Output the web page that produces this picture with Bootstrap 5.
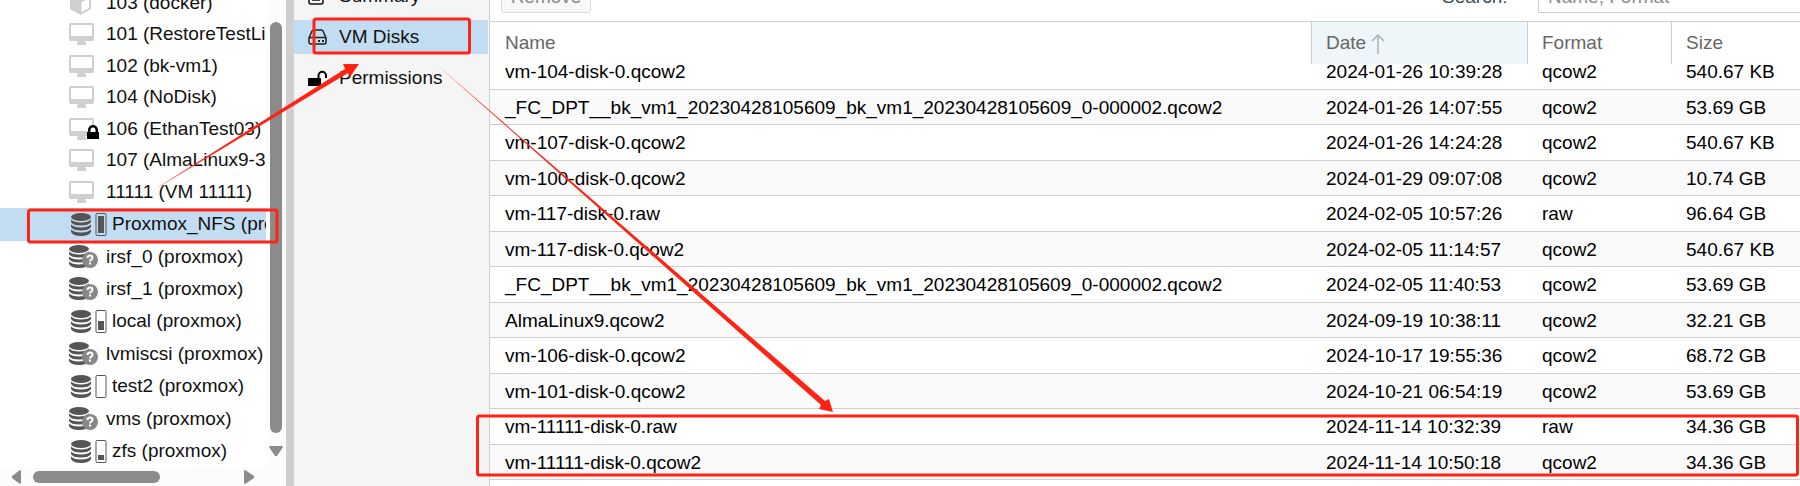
<!DOCTYPE html>
<html lang="en">
<head>
<meta charset="utf-8">
<meta name="viewport" content="width=device-width, initial-scale=1">
<title>Proxmox VE - VM Disks</title>
<link rel="stylesheet" href="https://cdn.jsdelivr.net/npm/bootstrap@5.3.0/dist/css/bootstrap.min.css">
<style>
body{font-family:"Liberation Sans",Arial,sans-serif;font-size:19px;line-height:24px;color:#111;background:#fff}
a{color:inherit;text-decoration:none}
.shell{height:100vh}
.tree-pane{width:286px}
.tree-list{width:266px}
.node{height:32px;padding-left:69px;white-space:nowrap;flex:none}
.node.short{height:31px}
.node.store{height:33px}
.node.picked,.menu-link.picked{background:#c2ddf1}
.node svg{flex:none}
.node .ico{width:37px;flex:none}
.node .ico-s{width:43px;flex:none}
.vbar{width:20px;padding:22px 0 10px;gap:9px;background:#fcfcfc}
.vthumb{width:12px;border-radius:6px;background:#8b8b8b}
.hbar{height:19px;padding:0 12px;background:#fcfcfc}
.hthumb{width:127px;height:12px;border-radius:6px;background:#8b8b8b}
.splitter{width:8px;background:#cfcfcf}
.menu-pane{width:196px;background:#f5f5f5;border-right:1px solid #cfcfcf}
.menu-link{height:34px;padding-left:14px;margin-bottom:7px;margin-right:1px}
.menu-link svg{width:31px;flex:none}
.menu-list{margin-top:-21px}
.tools{height:21px;padding:0 0 8px 11px}
.tools .btn{height:32px;width:90px;font-size:19px;line-height:20px;color:#8a8a8a;background:#f8f8f8;border:1px solid #dcdcdc;border-radius:3px}
.tools label{color:#3f4d55;width:96px;line-height:32px}
.tools input{width:262px;height:32px;font-size:19px;border:1px solid #cfcfcf;border-right:0;border-radius:0;padding:4px 9px}
.tools input::placeholder{color:#8c8c8c}
.disks{table-layout:fixed;border-top:1px solid #cfcfcf;border-collapse:separate;border-spacing:0}
.disks th{height:42px;padding:0 0 0 14px;font-weight:400;color:#666;vertical-align:middle;border-right:1px solid #cfcfcf}
.disks th:last-child{border-right:0}
.disks th.sorted{background:#eff6fa}
.disks td{height:35px;padding:1px 0 0 14px;border-bottom:1px solid #cfcfcf;white-space:nowrap;color:#000}
.disks th:first-child,.disks td:first-child{padding-left:15px}
.disks tbody tr:nth-child(odd) td{height:36px}
.disks tbody tr:nth-child(even) td{background:#fafafa}
.disks tbody tr:first-child td{height:26px;line-height:12px;padding-top:0;padding-bottom:10px}
.c-date{width:216px}.c-format{width:144px}.c-size{width:128px}
.marks{pointer-events:none}
</style>
</head>
<body class="overflow-hidden">
<svg class="d-none" aria-hidden="true">
<symbol id="i-vm" viewBox="0 0 25 22"><path fill="#cfcfcf" fill-rule="evenodd" d="M2 0h21q2 0 2 2v14q0 2-2 2h-7l1 2v2H8v-2l1-2H2q-2 0-2-2V2Q0 0 2 0zM2 2v11h21V2z"/></symbol>
<symbol id="i-lock" viewBox="0 0 12 14"><path d="M0 7h1V5a5 5 0 0 1 10 0v2h1v7H0z"/><path fill="#fff" d="M3.500 7V5a2.500 2.500 0 0 1 5 0v2z"/></symbol>
<symbol id="i-db" viewBox="0 0 20 23"><g fill="#555"><ellipse cx="10" cy="4" rx="10" ry="4"/><path d="M0 6.500q3 3 10 3t10-3v2.500q-2 3.500-10 3.500T0 9zM0 11.500q3 3 10 3t10-3V14q-2 3.500-10 3.500T0 14zM0 16.500q3 3 10 3t10-3V19q-2 4-10 4T0 19z"/></g></symbol>
<symbol id="i-dbq" viewBox="0 0 29 23"><use href="#i-db" width="20" height="23"/><circle cx="21" cy="15" r="8" fill="#888"/><path d="M18.500 13q0-2.500 2.500-2.500t2.500 2.300q0 1.200-1.500 2-1 .6-1 1.700" fill="none" stroke="#fff" stroke-width="2"/><path fill="#fff" d="M20 17.500h2v2h-2z"/></symbol>
</svg>
<div class="shell d-flex position-relative overflow-hidden">
 <aside class="tree-pane d-flex flex-column flex-shrink-0">
  <div class="d-flex flex-grow-1 overflow-hidden">
   <nav class="tree-list d-flex flex-column justify-content-end overflow-hidden" aria-label="Resources">
    <a href="#" class="node d-flex align-items-center"><span class="ico d-flex"><svg width="23" height="26" viewBox="0 0 23 26"><path fill="#cfcfcf" d="M11.500 1 22 5v14l-10.500 6L1 19V5z"/><path fill="#fff" d="m12.500 12 7.500-3.500v9.500l-7.500 4zM4 5.500 11.500 3 19 5.500 11.500 9z"/></svg></span>103 (docker)</a>
    <a href="#" class="node short d-flex align-items-center"><span class="ico d-flex"><svg width="25" height="22"><use href="#i-vm"/></svg></span>101 (RestoreTestLinux)</a>
    <a href="#" class="node d-flex align-items-center"><span class="ico d-flex"><svg width="25" height="22"><use href="#i-vm"/></svg></span>102 (bk-vm1)</a>
    <a href="#" class="node short d-flex align-items-center"><span class="ico d-flex"><svg width="25" height="22"><use href="#i-vm"/></svg></span>104 (NoDisk)</a>
    <a href="#" class="node d-flex align-items-center"><span class="ico d-flex"><svg width="30" height="22"><use href="#i-vm" width="25" height="22"/><use href="#i-lock" x="18" y="7" width="12" height="14"/></svg></span>106 (EthanTest03)</a>
    <a href="#" class="node short d-flex align-items-center"><span class="ico d-flex"><svg width="25" height="22"><use href="#i-vm"/></svg></span>107 (AlmaLinux9-3-test)</a>
    <a href="#" class="node d-flex align-items-center"><span class="ico d-flex"><svg width="25" height="22"><use href="#i-vm"/></svg></span>11111 (VM 11111)</a>
    <a href="#" class="node store picked d-flex align-items-center"><span class="ico-s d-flex"><svg width="39" height="23"><use href="#i-db" x="2" width="20" height="23"/><rect x="27" y=".5" width="10" height="22" rx="1" fill="none" stroke="#555"/><path fill="#555" d="M29 3h6v17h-6z"/></svg></span>Proxmox_NFS (proxmox)</a>
    <a href="#" class="node d-flex align-items-center"><span class="ico d-flex"><svg width="29" height="23"><use href="#i-dbq"/></svg></span>irsf_0 (proxmox)</a>
    <a href="#" class="node d-flex align-items-center"><span class="ico d-flex"><svg width="29" height="23"><use href="#i-dbq"/></svg></span>irsf_1 (proxmox)</a>
    <a href="#" class="node store d-flex align-items-center"><span class="ico-s d-flex"><svg width="39" height="23"><use href="#i-db" x="2" width="20" height="23"/><rect x="27" y=".5" width="10" height="22" rx="1" fill="none" stroke="#555"/><path fill="#555" d="M29 11h6v9h-6z"/></svg></span>local (proxmox)</a>
    <a href="#" class="node d-flex align-items-center"><span class="ico d-flex"><svg width="29" height="23"><use href="#i-dbq"/></svg></span>lvmiscsi (proxmox)</a>
    <a href="#" class="node store d-flex align-items-center"><span class="ico-s d-flex"><svg width="39" height="23"><use href="#i-db" x="2" width="20" height="23"/><rect x="27" y=".5" width="10" height="22" rx="1" fill="none" stroke="#555"/></svg></span>test2 (proxmox)</a>
    <a href="#" class="node d-flex align-items-center"><span class="ico d-flex"><svg width="29" height="23"><use href="#i-dbq"/></svg></span>vms (proxmox)</a>
    <a href="#" class="node store d-flex align-items-center"><span class="ico-s d-flex"><svg width="39" height="23"><use href="#i-db" x="2" width="20" height="23"/><rect x="27" y=".5" width="10" height="22" rx="1" fill="none" stroke="#555"/><path fill="#555" d="M29 15h6v5h-6z"/></svg></span>zfs (proxmox)</a>
   </nav>
   <div class="vbar d-flex flex-column align-items-center">
    <div class="vthumb flex-grow-1"></div>
    <svg width="14" height="16" viewBox="0 0 14 16"><path fill="#8b8b8b" d="M1 4h12l1 1-6 9H6L0 5z"/></svg>
   </div>
  </div>
  <div class="hbar d-flex align-items-center">
   <svg width="21" height="14" viewBox="0 0 21 14"><path fill="#8b8b8b" d="M9 1v12l-1 1-8-6V6l8-6z"/></svg>
   <div class="hthumb"></div>
   <svg class="ms-auto me-3" width="14" height="14" viewBox="0 0 14 14"><path fill="#8b8b8b" d="M1 0l9 6v2l-9 6-1-1V1z"/></svg>
  </div>
 </aside>
 <div class="splitter flex-shrink-0"></div>
 <nav class="menu-pane flex-shrink-0" aria-label="Storage">
  <div class="menu-list">
   <a href="#" class="menu-link d-flex align-items-center"><svg width="31" height="20" viewBox="0 0 31 20"><path fill="none" stroke="#111" stroke-width="1.500" d="M1 1h14v15q0 2-2 2H3q-2 0-2-2zM4 14h8"/></svg>Summary</a>
   <a href="#" class="menu-link picked d-flex align-items-center"><svg width="31" height="16" viewBox="0 0 31 16"><path fill="none" stroke="#222" stroke-width="1.500" d="M1 9 4 2q.5-1 2-1h7q1.500 0 2 1l3 7v4q0 2-2 2H3q-2 0-2-2zM1 10q0-1.500 2-1.500h13q2 0 2 1.500"/><path fill="#222" d="M10 11h2v2h-2zM14 11h2v2h-2z"/></svg>VM Disks</a>
   <a href="#" class="menu-link d-flex align-items-center"><svg width="31" height="16" viewBox="0 0 31 16"><path d="M0 9q0-1 1-1h11q1 0 1 1v7H0z"/><path fill="none" stroke="#000" stroke-width="2" d="M10.500 8V5.500a3.700 3.700 0 0 1 7.500 0V8"/></svg>Permissions</a>
  </div>
 </nav>
 <main class="flex-grow-1 overflow-hidden">
  <div class="tools d-flex align-items-end">
   <button type="button" class="btn p-0">Remove</button>
   <label for="q" class="ms-auto">Search:</label>
   <input id="q" type="text" class="form-control" placeholder="Name, Format">
  </div>
  <table class="disks w-100">
   <colgroup><col><col class="c-date"><col class="c-format"><col class="c-size"></colgroup>
   <thead><tr><th scope="col">Name</th><th scope="col" class="sorted" aria-sort="ascending">Date <svg width="14" height="22" viewBox="0 0 14 22"><path fill="none" stroke="#b0b0b0" stroke-width="1.500" d="M7 21V2M1 8l6-6 6 6"/></svg></th><th scope="col">Format</th><th scope="col">Size</th></tr></thead>
   <tbody>
    <tr><td>vm-104-disk-0.qcow2</td><td>2024-01-26 10:39:28</td><td>qcow2</td><td>540.67 KB</td></tr>
    <tr><td>_FC_DPT__bk_vm1_20230428105609_bk_vm1_20230428105609_0-000002.qcow2</td><td>2024-01-26 14:07:55</td><td>qcow2</td><td>53.69 GB</td></tr>
    <tr><td>vm-107-disk-0.qcow2</td><td>2024-01-26 14:24:28</td><td>qcow2</td><td>540.67 KB</td></tr>
    <tr><td>vm-100-disk-0.qcow2</td><td>2024-01-29 09:07:08</td><td>qcow2</td><td>10.74 GB</td></tr>
    <tr><td>vm-117-disk-0.raw</td><td>2024-02-05 10:57:26</td><td>raw</td><td>96.64 GB</td></tr>
    <tr><td>vm-117-disk-0.qcow2</td><td>2024-02-05 11:14:57</td><td>qcow2</td><td>540.67 KB</td></tr>
    <tr><td>_FC_DPT__bk_vm1_20230428105609_bk_vm1_20230428105609_0-000002.qcow2</td><td>2024-02-05 11:40:53</td><td>qcow2</td><td>53.69 GB</td></tr>
    <tr><td>AlmaLinux9.qcow2</td><td>2024-09-19 10:38:11</td><td>qcow2</td><td>32.21 GB</td></tr>
    <tr><td>vm-106-disk-0.qcow2</td><td>2024-10-17 19:55:36</td><td>qcow2</td><td>68.72 GB</td></tr>
    <tr><td>vm-101-disk-0.qcow2</td><td>2024-10-21 06:54:19</td><td>qcow2</td><td>53.69 GB</td></tr>
    <tr><td>vm-11111-disk-0.raw</td><td>2024-11-14 10:32:39</td><td>raw</td><td>34.36 GB</td></tr>
    <tr><td>vm-11111-disk-0.qcow2</td><td>2024-11-14 10:50:18</td><td>qcow2</td><td>34.36 GB</td></tr>
   </tbody>
  </table>
 </main>
 <svg class="marks position-absolute top-0 start-0" width="1800" height="486" viewBox="0 0 1800 486" aria-hidden="true">
  <g fill="none" stroke="#ff2314" stroke-width="3"><rect x="28.500" y="210" width="248.500" height="32" rx="2"/><rect x="314" y="19" width="155.500" height="34" rx="2"/><rect x="477.500" y="416" width="1320" height="59" rx="2"/></g>
  <g fill="#ff2314"><path d="M152 191 345 69l-2-5h16l-9 13-2-4z"/><path d="M436 64 825 401l4-2 4 13-14-3 2-4z"/></g>
 </svg>
</div>
<script src="https://cdn.jsdelivr.net/npm/bootstrap@5.3.0/dist/js/bootstrap.bundle.min.js"></script>
</body>
</html>
